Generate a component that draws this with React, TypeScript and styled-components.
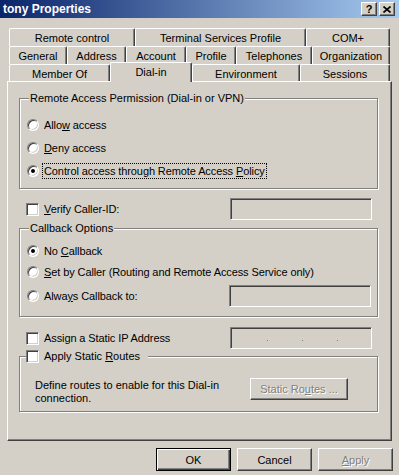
import styled, { createGlobalStyle } from 'styled-components';

const BG = '#D4D0C8';
const SHADOW = '#808080';
const DARK = '#404040';
const FONT = '"Liberation Sans", Arial, sans-serif';

const GlobalStyle = createGlobalStyle`
  html, body {
    margin: 0;
    padding: 0;
    background: ${BG};
  }
  body {
    font-family: ${FONT};
    font-size: 11px;
    color: #000;
  }
  * {
    box-sizing: border-box;
  }
`;

const Window = styled.div`
  width: 399px;
  height: 475px;
  display: flex;
  flex-direction: column;
  background: ${BG};
  overflow: hidden;
`;

const TitleBar = styled.div`
  height: 18px;
  flex-shrink: 0;
  display: flex;
  align-items: center;
  justify-content: space-between;
  padding: 0 4px 0 3px;
  background: linear-gradient(to right, #0a246a, #a6caf0);
  color: #fff;
  font-weight: bold;
  font-size: 12px;
`;

const CaptionButtons = styled.div`
  display: flex;
  gap: 2px;
`;

const CaptionButton = styled.div`
  width: 16px;
  height: 14px;
  display: flex;
  align-items: center;
  justify-content: center;
  background: ${BG};
  border: 1px solid;
  border-color: #fff ${DARK} ${DARK} #fff;
  box-shadow: inset -1px -1px ${SHADOW};
  color: #000;
  font-size: 11px;
  font-weight: bold;
  line-height: 1;
`;

const Main = styled.div`
  display: flex;
  flex-direction: column;
  padding: 10px 0 0 7px;
`;

const TabStrip = styled.div`
  display: flex;
  flex-direction: column;
  padding-left: 2px;
`;

const TabRow = styled.div<{ $height: number }>`
  display: flex;
  height: ${(p) => p.$height}px;
  align-items: flex-start;
`;

const Tab = styled.div<{ $width: number; $active?: boolean }>`
  width: ${(p) => p.$width}px;
  height: ${(p) => (p.$active ? 20 : 18)}px;
  margin-top: ${(p) => (p.$active ? -2 : 0)}px;
  position: ${(p) => (p.$active ? 'relative' : 'static')};
  z-index: ${(p) => (p.$active ? 1 : 'auto')};
  display: flex;
  align-items: center;
  justify-content: center;
  background: ${BG};
  border-top: 1px solid #fff;
  border-left: 1px solid #fff;
  border-right: 1px solid ${DARK};
  border-radius: 2px 2px 0 0;
  box-shadow: inset -1px 0 ${SHADOW};
  padding-bottom: ${(p) => (p.$active ? 1 : 0)}px;
  white-space: nowrap;
`;

const Panel = styled.div`
  width: 385px;
  height: 360px;
  display: flex;
  flex-direction: column;
  padding-left: 11px;
  border: 1px solid;
  border-color: #fff ${DARK} ${DARK} #fff;
  box-shadow: inset -1px -1px ${SHADOW};
`;

const GroupBox = styled.div<{ $height: number; $top: number }>`
  width: 359px;
  height: ${(p) => p.$height}px;
  margin-top: ${(p) => p.$top}px;
  display: flex;
  flex-direction: column;
  border: 1px solid ${SHADOW};
  box-shadow: inset 1px 1px #fff, 1px 1px #fff;
`;

const Legend = styled.div<{ $left: number }>`
  align-self: flex-start;
  display: flex;
  align-items: center;
  gap: 5px;
  height: 13px;
  line-height: 13px;
  margin: -7px 0 0 ${(p) => p.$left}px;
  padding: 0 ${(p) => (p.$left > 6 ? 1 : 8)}px 0 ${(p) => (p.$left > 6 ? 1 : 0)}px;
  background: ${BG};
  white-space: nowrap;
`;

const OptionList = styled.div<{ $top: number; $gap: number }>`
  display: flex;
  flex-direction: column;
  gap: ${(p) => p.$gap}px;
  margin-top: ${(p) => p.$top}px;
  padding: 0 6px 0 7px;
`;

const OptionRow = styled.div<{ $tall?: boolean }>`
  display: flex;
  align-items: center;
  justify-content: space-between;
  height: ${(p) => (p.$tall ? 22 : 16)}px;
`;

const Choice = styled.label`
  display: flex;
  align-items: center;
  gap: 3px;
  white-space: nowrap;
`;

const RadioCircle = styled.span`
  width: 12px;
  height: 12px;
  flex-shrink: 0;
  display: flex;
  align-items: center;
  justify-content: center;
  border-radius: 50%;
  background: #fff;
  border: 1px solid;
  border-color: ${SHADOW} #fff #fff ${SHADOW};
  box-shadow: inset 1px 1px ${DARK}, inset -1px -1px ${BG};
`;

const RadioDot = styled.span`
  width: 4px;
  height: 4px;
  border-radius: 50%;
  background: #000;
`;

const CheckSquare = styled.span`
  width: 13px;
  height: 13px;
  flex-shrink: 0;
  background: #fff;
  border: 1px solid;
  border-color: ${SHADOW} #fff #fff ${SHADOW};
  box-shadow: inset 1px 1px ${DARK}, inset -1px -1px ${BG};
`;

const LabelText = styled.span<{ $focused?: boolean }>`
  line-height: 14px;
  padding: 0 1px;
  letter-spacing: -0.1px;
  border: 1px ${(p) => (p.$focused ? 'dotted #000' : 'solid transparent')};
`;

const FieldRow = styled.div<{ $top: number }>`
  width: 359px;
  height: 22px;
  margin-top: ${(p) => p.$top}px;
  display: flex;
  align-items: center;
  justify-content: space-between;
  padding: 0 6px 0 7px;
`;

const TextField = styled.div`
  width: 142px;
  height: 22px;
  display: flex;
  align-items: flex-end;
  gap: 34px;
  padding: 0 0 7px 36px;
  background: ${BG};
  border: 1px solid;
  border-color: ${SHADOW} #fff #fff ${SHADOW};
  box-shadow: inset 1px 1px ${DARK}, inset -1px -1px ${BG};
`;

const IpDot = styled.span`
  width: 1px;
  height: 1px;
  background: ${SHADOW};
`;

const RoutesBody = styled.div`
  display: flex;
  align-items: flex-start;
  justify-content: space-between;
  margin-top: 16px;
  padding: 0 29px 0 15px;
`;

const RoutesText = styled.div`
  width: 200px;
  line-height: 13px;
`;

const PushButton = styled.div<{ $width: number; $height: number; $default?: boolean; $disabled?: boolean }>`
  width: ${(p) => p.$width}px;
  height: ${(p) => p.$height}px;
  display: flex;
  align-items: center;
  justify-content: center;
  background: ${BG};
  white-space: nowrap;
  color: ${(p) => (p.$disabled ? SHADOW : '#000')};
  text-shadow: ${(p) => (p.$disabled ? '1px 1px 0 #fff' : 'none')};
  border: 1px solid;
  border-color: ${(p) => (p.$default ? '#000' : `#fff ${DARK} ${DARK} #fff`)};
  box-shadow: ${(p) =>
    p.$default
      ? `inset 1px 1px #fff, inset -1px -1px ${DARK}, inset -2px -2px ${SHADOW}`
      : `inset -1px -1px ${SHADOW}`};
`;

const RoutesButton = styled(PushButton)`
  margin-top: -1px;
`;

const ButtonBar = styled.div`
  display: flex;
  justify-content: flex-end;
  gap: 6px;
  padding: 7px 6px 0 0;
`;

const TAB_ROWS = [
  {
    height: 18,
    tabs: [
      { label: 'Remote control', width: 126 },
      { label: 'Terminal Services Profile', width: 171 },
      { label: 'COM+', width: 84 },
    ],
  },
  {
    height: 18,
    tabs: [
      { label: 'General', width: 58 },
      { label: 'Address', width: 59 },
      { label: 'Account', width: 60 },
      { label: 'Profile', width: 50 },
      { label: 'Telephones', width: 76 },
      { label: 'Organization', width: 78 },
    ],
  },
  {
    height: 17,
    tabs: [
      { label: 'Member Of', width: 101 },
      { label: 'Dial-in', width: 82, active: true },
      { label: 'Environment', width: 108 },
      { label: 'Sessions', width: 90 },
    ],
  },
];

const Radio = ({ checked }: { checked?: boolean }) => (
  <RadioCircle>{checked && <RadioDot />}</RadioCircle>
);

const CloseGlyph = () => (
  <svg width="8" height="7" viewBox="0 0 8 7">
    <path d="M0.5 0.5 L7.5 6.5 M7.5 0.5 L0.5 6.5" stroke="#000" strokeWidth="1.6" />
  </svg>
);

const App = () => {
  return (
    <>
      <GlobalStyle />
      <Window>
        <TitleBar>
          <span>tony Properties</span>
          <CaptionButtons>
            <CaptionButton>?</CaptionButton>
            <CaptionButton>
              <CloseGlyph />
            </CaptionButton>
          </CaptionButtons>
        </TitleBar>

        <Main>
          <TabStrip>
            {TAB_ROWS.map((row, i) => (
              <TabRow key={i} $height={row.height}>
                {row.tabs.map((t) => (
                  <Tab key={t.label} $width={t.width} $active={'active' in t && t.active}>
                    {t.label}
                  </Tab>
                ))}
              </TabRow>
            ))}
          </TabStrip>

          <Panel>
            <GroupBox $height={91} $top={16}>
              <Legend $left={9}>Remote Access Permission (Dial-in or VPN)</Legend>
              <OptionList $top={12} $gap={7}>
                <OptionRow>
                  <Choice>
                    <Radio />
                    <LabelText>
                      Allo<u>w</u> access
                    </LabelText>
                  </Choice>
                </OptionRow>
                <OptionRow>
                  <Choice>
                    <Radio />
                    <LabelText>
                      <u>D</u>eny access
                    </LabelText>
                  </Choice>
                </OptionRow>
                <OptionRow>
                  <Choice>
                    <Radio checked />
                    <LabelText $focused>
                      Control access through Remote Access <u>P</u>olicy
                    </LabelText>
                  </Choice>
                </OptionRow>
              </OptionList>
            </GroupBox>

            <FieldRow $top={9}>
              <Choice>
                <CheckSquare />
                <LabelText>
                  <u>V</u>erify Caller-ID:
                </LabelText>
              </Choice>
              <TextField />
            </FieldRow>

            <GroupBox $height={89} $top={8}>
              <Legend $left={9}>Callback Options</Legend>
              <OptionList $top={8} $gap={5}>
                <OptionRow>
                  <Choice>
                    <Radio checked />
                    <LabelText>
                      No <u>C</u>allback
                    </LabelText>
                  </Choice>
                </OptionRow>
                <OptionRow>
                  <Choice>
                    <Radio />
                    <LabelText>
                      <u>S</u>et by Caller (Routing and Remote Access Service only)
                    </LabelText>
                  </Choice>
                </OptionRow>
                <OptionRow $tall>
                  <Choice>
                    <Radio />
                    <LabelText>
                      Alwa<u>y</u>s Callback to:
                    </LabelText>
                  </Choice>
                  <TextField />
                </OptionRow>
              </OptionList>
            </GroupBox>

            <FieldRow $top={10}>
              <Choice>
                <CheckSquare />
                <LabelText>Assign a Static IP Address</LabelText>
              </Choice>
              <TextField>
                <IpDot />
                <IpDot />
                <IpDot />
              </TextField>
            </FieldRow>

            <GroupBox $height={56} $top={7}>
              <Legend $left={6}>
                <CheckSquare />
                <span>
                  Apply Static <u>R</u>outes
                </span>
              </Legend>
              <RoutesBody>
                <RoutesText>Define routes to enable for this Dial-in connection.</RoutesText>
                <RoutesButton $width={98} $height={22} $disabled>
                  Static Ro<u>u</u>tes ...
                </RoutesButton>
              </RoutesBody>
            </GroupBox>
          </Panel>

          <ButtonBar>
            <PushButton $width={75} $height={23} $default>
              OK
            </PushButton>
            <PushButton $width={75} $height={23}>
              Cancel
            </PushButton>
            <PushButton $width={75} $height={23} $disabled>
              <u>A</u>pply
            </PushButton>
          </ButtonBar>
        </Main>
      </Window>
    </>
  );
};

export default App;
